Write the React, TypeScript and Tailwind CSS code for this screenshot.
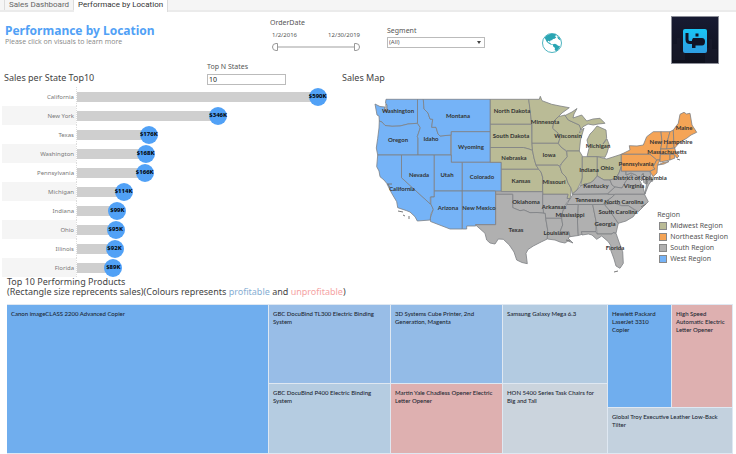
import React from "react";

type StateShape = { region: Region; d: string };
type Region = "midwest" | "northeast" | "south" | "west";

const fills: Record<Region, string> = {
  midwest: "#babb96",
  northeast: "#f5a456",
  south: "#b0b0b0",
  west: "#75b3f7",
};

const shapes: StateShape[] = [
  { region: "west", d: "M386 99.3H417.5V123.3L408 124L400 126L392 126.3L385 125.5L382 122L379.3 121L379 116L377 115L375 104L380 106.500L385 107L384 110L387 112L387 105L385.500 103Z" },
  { region: "west", d: "M379.3 121L382 122L385 125.5L392 126.3L400 126L408 124L417.5 123.3L420.3 127.7L417.3 136.7L418 138V155H377.7L376.3 148L377.7 138.3L379 128Z" },
  { region: "west", d: "M417.5 99.3H423.3L424 109L428 113L430 119L432.7 119.3L431.7 127.3L436 127.3L438 134L440 136L450.7 135V155H418V138L417.3 136.7L420.3 127.7L417.5 123.3Z" },
  { region: "west", d: "M423.3 99.3H490.3V131.7H451.3V135L440 136L438 134L436 127.3L431.7 127.3L432.7 119.3L430 119L428 113L424 109Z" },
  { region: "west", d: "M451.3 131.7H490.3V162.3H451.3Z" },
  { region: "west", d: "M377.7 155H401.5V177.7L431.7 205L433.3 209.3L431 214L430.3 220L417.3 221L415 216.7L410 212L406.7 210.7L397.7 207.7L396.7 201.7L391.7 193.3L389 188L386.7 183.3L384 180L380 176.7L379 171L376.7 166.7Z" },
  { region: "west", d: "M401.5 155H434.3V197L430.3 197V204L401.5 177.7Z" },
  { region: "west", d: "M434.3 155H451.3V162.3H462.3V191H434.3Z" },
  { region: "west", d: "M462.3 162.3H501.3V191H462.3Z" },
  { region: "west", d: "M434.3 191H462.3V229H450L430.500 221.500L430.3 218L433.3 209.3L430.8 204V197H434.3Z" },
  { region: "west", d: "M462.3 191H495.5V224.7H475.7V226H466.7V229H462.3Z" },
  { region: "midwest", d: "M490.3 99.3H528.7L530 108L531 118L531.500 124.3H490.3Z" },
  { region: "midwest", d: "M490.3 124.3H531.500L532 143.3L532.500 150.500L529 149L523.3 147.5H490.3Z" },
  { region: "midwest", d: "M490.3 147.5H523.3L529 149L532.500 150.500L534 158L536 165L538.7 169.3H501.3V162.3H490.3Z" },
  { region: "midwest", d: "M501.3 169.3H538.7L541 172L542.500 177V191.7H501.3Z" },
  { region: "midwest", d: "M528.7 99.3H539.3L540.3 96.3L542 100.7L551.7 104.3L560 106L569.3 107.7L562 113L558.3 116.7L554 121L552.7 128.3L558 133L560 138.3L558.3 143.3H532V125L531 118Z" },
  { region: "midwest", d: "M532 143.3H558.3L561 147L566.7 151.7L567.3 156.7L561.7 163.3L559.3 166L558 165.2H536L534 158L532.500 150.500Z" },
  { region: "midwest", d: "M536 165.2H558L560 167L562 173L566 177L568 183L571 188L571 193L570 199L567 198.500L568 194.300H542.7V177L541 172L538.7 169.3Z" },
  { region: "midwest", d: "M558.3 116.7L565 115L568.3 120L579.3 125L581 128.3L579.5 133L584 128L580.500 140L579.3 151H566.7L561 147L558.3 143.3L560 138.3L558 133L552.7 128.3L554 121Z" },
  { region: "midwest", d: "M565 115.5L572 112L577 108.5L574 114L573 118L581.7 115L586.7 121L593 119L600 118.3L605 123.3L598 124L593.3 125L588 124L583 126.7L581 130L579.3 125L568.3 120Z" },
  { region: "midwest", d: "M597 126L606 130L606.7 138.3L603 144L607 139L609.3 145L607 153L605 157.3L597.3 156.7H587L589 148.3L587 140L590 134L593 131Z" },
  { region: "midwest", d: "M566.7 151H579.3L582.3 156V178L580 184L577 190L572.500 194L571 188L568 183L566 177L562 173L560 167L561.7 163.3L567.3 156.7Z" },
  { region: "midwest", d: "M582.3 156.7H597.3V176L593 181L590 183L585 184L580.500 186L582.3 178Z" },
  { region: "midwest", d: "M597.3 156.7L606.7 159L613 157L621.3 154.3V166.7L619 173L616 178.3L610 180L604 180L597.3 176Z" },
  { region: "northeast", d: "M621.3 154.3L630 150L629.3 145.7L637 146L643.3 145L646.7 136.7L653.3 131.7H661L662 142L660.7 150L660 160L656.7 160L650 154.3Z" },
  { region: "northeast", d: "M621.3 154.3H650L656.7 160L653.3 166.7L655 169L650 171.3H621.3Z" },
  { region: "northeast", d: "M656.7 160L660 160L657.500 165L657 173L653 176.7L650 171.3L655 169L653.3 166.7Z" },
  { region: "northeast", d: "M661 131.7H670L668 139L666.7 149H660.7L662 142Z" },
  { region: "northeast", d: "M670 131.7L673.3 130L674 146.7L674.7 148L666.7 149L668 139Z" },
  { region: "northeast", d: "M673.3 130L678.3 123.3L680 114.3L684 112.3L686.500 114L690 113.3L692 125L696.7 132.3L691 135L686.7 138.3L680 142L674.7 148L674 146.7Z" },
  { region: "northeast", d: "M660.7 149H666.7L674.7 148L676 153L679 156L677 158L674 154.3H660.3Z" },
  { region: "northeast", d: "M660.3 154.3H670V160L660 162Z" },
  { region: "northeast", d: "M670 154.3H674L675 158L670 160Z" },
  { region: "northeast", d: "M658 165L663 162.500L669 161.500L664 164Z" },
  { region: "south", d: "M495.7 191.7H542.7V203L544 213.3L537 212.500L530 212.7L524 210L520 210.7L512.7 207.7V194.3H495.7Z" },
  { region: "south", d: "M495.7 194.3H512.7V207.7L520 210.7L524 210L530 212.7L537 212.500L545.3 213.3L545.7 218.3L547.7 230L547.3 239L541.7 241.7L533.3 246L528 249.500L526 253.3L527.3 263.7L522 262.500L516.7 260L514 252L509.3 245L503.3 239.3L498.3 239L495 244L490 243L486.7 240L485 233.3L475.7 225V224.7H495.7Z" },
  { region: "south", d: "M542.7 194.3H568L567 198.500H570L566.7 203L564 207L562.7 211.7L561.7 218.3H545.7L545.3 213.3L543.500 213L542.7 203Z" },
  { region: "south", d: "M545.7 218.3H561.7L562.7 225L560 231.7H569L570 236.7L568 238L573 243L568 241L565 243L560 242L555 240L547.3 239L547.7 230Z" },
  { region: "south", d: "M566.7 204.500H578.3L577.500 222L578.3 235.500L570 236.7L569 231.7H560L562.7 225L561.7 218.3L562.7 211.7Z" },
  { region: "south", d: "M578.3 204.500H592.7L596 221V231.7H581.500L583 234L578.3 235.500L577.500 222Z" },
  { region: "south", d: "M592.7 204.500H604.500L610 211L618.3 223.3L616 233.3L613 232.700L612 234H597L596 221Z" },
  { region: "south", d: "M581.500 231.7H596L597 234H612L613 232.700L616 233.3L619 242L622.7 251.7L623.3 263.3L620 268.3L616 266L614 259L610.7 250L611 246L608.3 241.7L601.7 236L596.7 239.3L592 235L588.3 234L582 235Z" },
  { region: "south", d: "M570 199L573 194.3H615L611 198L605 202L603 204.500H566.7Z" },
  { region: "south", d: "M572 194.3L577 190L580.500 186L585 184L590 183L593 181L597.3 176L604 180H610L612 185L615 187L608 193.500Z" },
  { region: "south", d: "M610 180L616 178.3L619 173L621.3 166.7V171.3H626V175L631 173L635 172L630 176L626 181L622 188L615 187L612 185Z" },
  { region: "south", d: "M608 193.500L615 187L622 188L626 181L630 176L635 174L639 179L641 183L643 187L645 194.3H608Z" },
  { region: "south", d: "M626 171.3H650L651 177L653 181L648 182L645 184L645 177L642 174L642 181L636 175L631 173L626 175Z" },
  { region: "south", d: "M648 180H652L648.500 185L645 194L646.500 184Z" },
  { region: "south", d: "M615 194.3H644.500L648.3 201.7L643.3 206.7L638.3 211.7L628.3 205.7H621.7L615 203.3L604 204.500L605 202L611 198Z" },
  { region: "south", d: "M604.500 204.500L615 203.3L621.7 205.7H628.3L636.7 211.7L633.3 216.7L626 221L618.3 223.3L610 211Z" },
];

const labels: [string, number, number][] = [
  ["Washington", 398, 111], ["Montana", 458, 116], ["Oregon", 398, 140], ["Idaho", 431, 139],
  ["Wyoming", 471, 147], ["Nevada", 419, 175], ["Utah", 447, 175], ["Colorado", 482, 177],
  ["California", 402, 189], ["Arizona", 448, 208], ["New Mexico", 479, 208],
  ["North Dakota", 512, 111], ["South Dakota", 511, 136], ["Nebraska", 514, 158], ["Kansas", 521, 181],
  ["Minnesota", 545, 122], ["Iowa", 549, 155], ["Wisconsin", 568, 136], ["Missouri", 554, 182],
  ["Michigan", 598, 146], ["Indiana", 589, 170], ["Ohio", 607, 168], ["Maine", 684, 128],
  ["New Hampshire", 671, 142], ["Massachusetts", 667, 152], ["Pennsylvania", 636, 164],
  ["District of Columbia", 640, 178], ["Kentucky", 596, 186], ["Virginia", 634, 186],
  ["Tennessee", 589, 200], ["North Carolina", 624, 202], ["South Carolina", 618, 212],
  ["Oklahoma", 526, 202], ["Arkansas", 554, 207], ["Mississippi", 570, 215], ["Georgia", 605, 224],
  ["Texas", 516, 230], ["Louisiana", 556, 233], ["Florida", 615, 248],
];

const states: [string, number][] = [
  ["California", 590], ["New York", 346], ["Texas", 176], ["Washington", 168], ["Pennsylvania", 166],
  ["Michigan", 114], ["Indiana", 99], ["Ohio", 95], ["Illinois", 92], ["Florida", 89],
];

function Tabs() {
  return (
    <nav className="flex h-3 items-start border-b-2 border-[#ebebeb] bg-[#f5f5f5] pl-1 font-['Roboto',sans-serif] text-[8px] leading-[10px]">
      <button className="h-[10px] border-x border-[#dcdcdc] px-1 text-[#666]">Sales Dashboard</button>
      <button className="h-3 border-r border-[#dcdcdc] bg-white px-1 pb-[2px] text-[#333]">Performace by Location</button>
    </nav>
  );
}

const thumb =
  "pointer-events-none absolute inset-x-0 top-0 h-2 w-full appearance-none bg-transparent [&::-webkit-slider-thumb]:pointer-events-auto [&::-webkit-slider-thumb]:h-2 [&::-webkit-slider-thumb]:w-[6px] [&::-webkit-slider-thumb]:appearance-none [&::-webkit-slider-thumb]:border [&::-webkit-slider-thumb]:border-[#999] [&::-webkit-slider-thumb]:bg-white";

function DateRange() {
  return (
    <fieldset className="mt-[6px] w-[92px]">
      <legend className="text-[7px] leading-[10px] text-[#555]">OrderDate</legend>
      <div className="mt-[3px] flex justify-between px-[2px] text-[6px] leading-[8px] text-[#555]">
        <span>1/2/2016</span>
        <span>12/30/2019</span>
      </div>
      <div className="relative mx-[2px] mt-1 flex h-2 items-center">
        <div className="h-[2px] w-full bg-[#cfcfcf]" />
        <input type="range" aria-label="Start date" min={0} max={1458} defaultValue={0} className={`${thumb} [&::-webkit-slider-thumb]:rounded-l-full`} />
        <input type="range" aria-label="End date" min={0} max={1458} defaultValue={1458} className={`${thumb} [&::-webkit-slider-thumb]:rounded-r-full`} />
      </div>
    </fieldset>
  );
}

function Globe() {
  return (
    <svg viewBox="0 0 60 60" className="size-5" role="img" aria-label="Globe">
      <circle cx="30" cy="30" r="28.500" fill="#fff" stroke="#2aa5b3" strokeWidth="2.500" />
      <path fill="#2aa5b3" d="M8 14C13 7 20 3 28 2L40 3L44 7L38 9L43 13L38 17L33 18L30 22L26 22L24 26L20 23L17 25L19 28L24 29L28 34L33 33L32 35L27 35L19 31L14 26L11 20ZM45 9L52 14L56 22L53 21L48 17ZM33 34L39 32L45 35L48 38L54 39C52 46 48 51 42 55L38 50L39 45L33 40Z" />
    </svg>
  );
}

function Logo() {
  return (
    <svg viewBox="0 0 48 48" className="size-12" role="img" aria-label="up">
      <defs>
        <linearGradient id="tile" x1="0" y1="0" x2="0" y2="1">
          <stop offset="0" stopColor="#18c5f5" />
          <stop offset="1" stopColor="#2f9de2" />
        </linearGradient>
        <linearGradient id="night" x1="0" y1="0" x2="0" y2="1">
          <stop offset="0" stopColor="#181b32" />
          <stop offset="1" stopColor="#0e101c" />
        </linearGradient>
      </defs>
      <rect x=".5" y=".5" width="47" height="47" fill="url(#night)" stroke="#8c8e98" />
      <path fill="#1b1e30" d="M2 28h4v-6h3v14h5v8H2ZM34 47V32h4v-9h3v10h5v14Z" opacity=".5" />
      <rect x="12" y="13" width="24" height="24" rx="2" fill="url(#tile)" />
      <path d="M16 17V23.500Q16 26.500 19 26.500H23" fill="none" stroke="#101426" strokeWidth="3" />
      <rect x="24.500" y="17.500" width="3" height="3" fill="#101426" />
      <path fill="#101426" d="M22 22H31Q34 22 34 25.500Q34 29.500 31 29.500H24.500V32H21V24Z" />
    </svg>
  );
}

function SalesByState() {
  return (
    <ul className="mr-[2px] ml-[2px]">
      {states.map(([name, value], i) => (
        <li key={name} className="flex h-[19px] items-center">
          <span className={`flex h-[19px] w-[74px] items-center justify-end pt-[2px] pr-[2px] text-[6px] text-[#777] ${i % 2 ? "bg-[#f5f5f5]" : "bg-white"}`}>
            {name}
          </span>
          <div className="flex h-[19px] flex-1 items-center border-l border-dotted border-[#ddd]">
            <div className="flex h-[10px] items-center justify-end bg-[#cfcfcf]" style={{ width: `${value * 0.1551}%` }}>
              <span className="-mr-[9px] flex size-[18px] shrink-0 items-center justify-center rounded-full bg-[#51a1f6] text-[6px] font-bold text-black">
                ${value}K
              </span>
            </div>
          </div>
        </li>
      ))}
    </ul>
  );
}

function Legend() {
  const rows: [string, string][] = [
    ["Midwest Region", "bg-[#babb96]"],
    ["Northeast Region", "bg-[#f5a456]"],
    ["South Region", "bg-[#b0b0b0]"],
    ["West Region", "bg-[#75b3f7]"],
  ];
  return (
    <div className="col-start-1 row-start-1 mr-2 mb-[13px] self-end justify-self-end text-[7px] text-[#555]">
      <div className="leading-[10px]">Region</div>
      <ul>
        {rows.map(([name, color]) => (
          <li key={name} className="flex h-[11px] items-center gap-[3px] pl-[2px] leading-[11px]">
            <span className={`size-2 border border-[#888] ${color}`} />
            {name}
          </li>
        ))}
      </ul>
    </div>
  );
}

function SalesMap() {
  return (
    <div className="grid">
      <svg viewBox="342 87 394 190" className="col-start-1 row-start-1 w-full" role="img" aria-label="Sales by region">
        <g stroke="#7d8084" strokeWidth=".8" strokeLinejoin="round">
          {shapes.map((s, i) => (
            <path key={i} d={s.d} fill={fills[s.region]} />
          ))}
        </g>
        <path d="M386 104V112M384 110l3 1M387 184h5M388 184l2 4M398 211l5 1M403 215l2 1M409 216v3M643 173l1 10M646 176l1 8M677 159l3 1M641 207l5-3M614 272l4-1M566 240l4 1" fill="none" stroke="#777" strokeWidth="1" />
        <g textAnchor="middle" className="fill-[#333] font-['Lato',sans-serif] text-[6px] font-bold">
          {labels.map(([name, x, y]) => (
            <text key={name} x={x} y={y + 2}>{name}</text>
          ))}
        </g>
      </svg>
      <Legend />
    </div>
  );
}

function Tile({ name, className }: { name: string; className: string }) {
  return <div className={`border-r border-b border-[#dfe8f2] px-1 pt-[5px] leading-[8px] ${className}`}>{name}</div>;
}

function Products() {
  return (
    <section className="pr-[3px] pl-[7px]">
      <h2 className="text-[9px] text-[#444]">
        <span className="block leading-[9px]">Top 10 Performing Products</span>
        <span className="block leading-[11px]">
          (Rectangle size reprecents sales)(Colours represents <span className="text-[#86aed3]">profitable</span> and{" "}
          <span className="text-[#f5a3a3]">unprofitable</span>)
        </span>
      </h2>
      <div className="mt-[7px] grid min-h-[150px] grid-cols-[262fr_122fr_112fr_105fr_125fr] border-t border-[#dfe8f2] font-['Lato',sans-serif] text-[6px] font-medium text-[#1c2733]">
        <Tile name="Canon imageCLASS 2200 Advanced Copier" className="bg-[#70aeee]" />
        <div className="grid grid-rows-[79fr_70fr]">
          <Tile name="GBC DocuBind TL300 Electric Binding System" className="bg-[#98bde7]" />
          <Tile name="GBC DocuBind P400 Electric Binding System" className="bg-[#b5cce1]" />
        </div>
        <div className="grid grid-rows-[79fr_70fr]">
          <Tile name="3D Systems Cube Printer, 2nd Generation, Magenta" className="bg-[#93bbe7]" />
          <Tile name="Martin Yale Chadless Opener Electric Letter Opener" className="bg-[#deb0b0]" />
        </div>
        <div className="grid grid-rows-[79fr_70fr]">
          <Tile name="Samsung Galaxy Mega 6.3" className="bg-[#b3cbe1]" />
          <Tile name="HON 5400 Series Task Chairs for Big and Tall" className="bg-[#cbd4dd]" />
        </div>
        <div className="grid grid-cols-[64fr_61fr] grid-rows-[103fr_46fr]">
          <Tile name="Hewlett Packard LaserJet 3310 Copier" className="bg-[#70aeee]" />
          <Tile name="High Speed Automatic Electric Letter Opener" className="bg-[#deb0b0]" />
          <Tile name="Global Troy Executive Leather Low-Back Tilter" className="col-span-2 bg-[#c3d1de]" />
        </div>
      </div>
    </section>
  );
}

export default function App() {
  return (
    <main className="overflow-hidden bg-white font-['Noto_Sans',sans-serif]">
      <Tabs />
      <header className="flex h-[50px] items-start pl-[5px]">
        <div className="w-[265px] pt-3">
          <h1 className="text-[12px] leading-[13px] font-bold text-[#51a1f6]">Performance by Location</h1>
          <p className="font-['Open_Sans',sans-serif] text-[7px] leading-[9px] text-[#888]">Please click on visuals to learn more</p>
        </div>
        <DateRange />
        <div className="mt-[14px] ml-[25px] w-[98px] text-[#555]">
          <label htmlFor="segment" className="block text-[7px] leading-[10px]">Segment</label>
          <div className="relative mt-px">
            <select id="segment" className="block h-[11px] w-full appearance-none border border-[#bbb] bg-white pl-px text-[6px] leading-[9px]">
              <option>(All)</option>
            </select>
            <span className="pointer-events-none absolute top-1 right-1 border-x-2 border-t-[3px] border-x-transparent border-t-[#444]" />
          </div>
        </div>
        <div className="mt-[21px] ml-[57px]"><Globe /></div>
        <div className="mt-1 mr-[17px] ml-auto"><Logo /></div>
      </header>
      <div className="grid grid-cols-[171fr_197fr]">
        <section>
          <div className="flex h-[25px] items-start pl-1">
            <h2 className="w-[203px] pt-[10px] text-[9px] leading-3 text-[#444]">Sales per State Top10</h2>
            <div className="text-[#555]">
              <label htmlFor="top-n" className="block text-[7px] leading-[10px]">Top N States</label>
              <input id="top-n" defaultValue="10" className="mt-[2px] block h-[11px] w-[79px] border border-[#bbb] px-px text-[7px] leading-[9px] text-[#222]" />
            </div>
          </div>
          <SalesByState />
        </section>
        <section>
          <h2 className="h-[25px] pt-[10px] text-[9px] leading-3 text-[#444]">Sales Map</h2>
          <SalesMap />
        </section>
      </div>
      <Products />
    </main>
  );
}
